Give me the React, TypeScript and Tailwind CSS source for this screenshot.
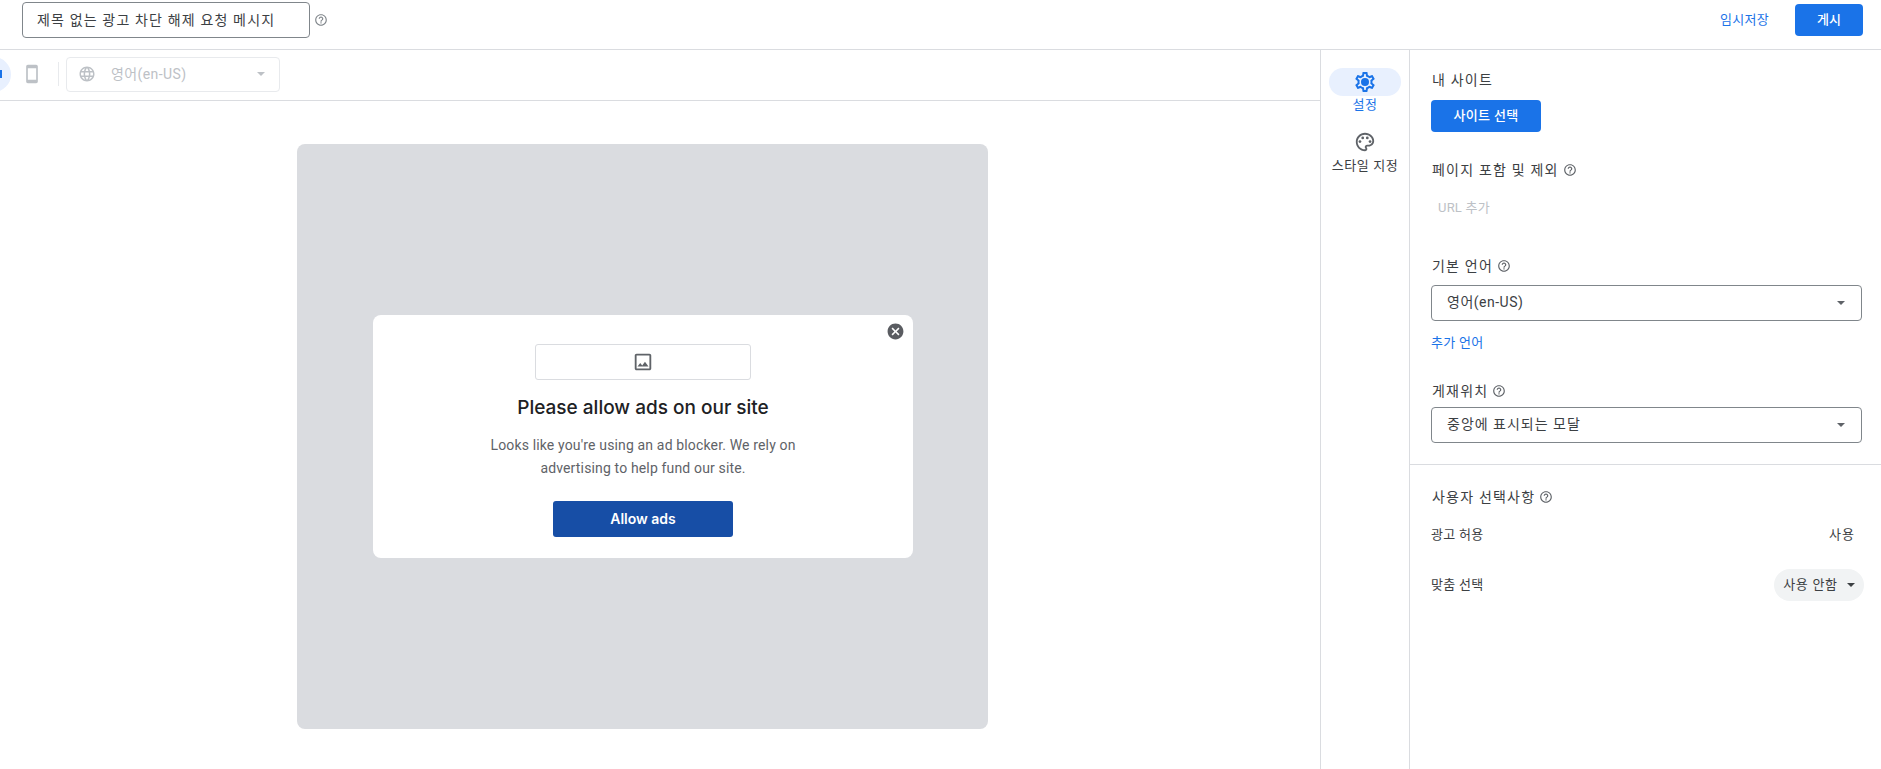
const font = "[font-family:Roboto,'Noto_Sans_CJK_KR',sans-serif]";

function Icon({ d, className, children }: { d?: string; className: string; children?: React.ReactNode }) {
  return (
    <svg viewBox="0 0 24 24" fill="currentColor" className={className}>
      {d && <path d={d} />}
      {children}
    </svg>
  );
}

const helpPath =
  "M11 18h2v-2h-2v2zm1-16C6.48 2 2 6.48 2 12s4.48 10 10 10 10-4.48 10-10S17.52 2 12 2zm0 18c-4.41 0-8-3.59-8-8s3.59-8 8-8 8 3.59 8 8-3.59 8-8 8zm0-14c-2.21 0-4 1.79-4 4h2c0-1.1.9-2 2-2s2 .9 2 2c0 2-3 1.75-3 5h2c0-2.25 3-2.5 3-5 0-2.21-1.79-4-4-4z";
const gearPath =
  "M19.43 12.98c.04-.32.07-.64.07-.98 0-.34-.03-.66-.07-.98l2.11-1.65c.19-.15.24-.42.12-.64l-2-3.46c-.09-.16-.26-.25-.44-.25-.06 0-.12.01-.17.03l-2.49 1c-.52-.4-1.08-.73-1.69-.98l-.38-2.65C14.46 2.18 14.25 2 14 2h-4c-.25 0-.46.18-.49.42l-.38 2.65c-.61.25-1.17.59-1.69.98l-2.49-1c-.06-.02-.12-.03-.18-.03-.17 0-.34.09-.43.25l-2 3.46c-.13.22-.07.49.12.64l2.11 1.65c-.04.32-.07.65-.07.98 0 .33.03.66.07.98l-2.11 1.65c-.19.15-.24.42-.12.64l2 3.46c.09.16.26.25.44.25.06 0 .12-.01.17-.03l2.49-1c.52.4 1.08.73 1.69.98l.38 2.65c.03.24.24.42.49.42h4c.25 0 .46-.18.49-.42l.38-2.65c.61-.25 1.17-.59 1.69-.98l2.49 1c.06.02.12.03.18.03.17 0 .34-.09.43-.25l2-3.46c.12-.22.07-.49-.12-.64l-2.11-1.65zm-1.98-1.71c.04.31.05.52.05.73 0 .21-.02.43-.05.73l-.14 1.13.89.7 1.08.84-.7 1.21-1.27-.51-1.04-.42-.9.68c-.43.32-.84.56-1.25.73l-1.06.43-.16 1.13-.2 1.35h-1.4l-.19-1.35-.16-1.13-1.06-.43c-.43-.18-.83-.41-1.23-.71l-.91-.7-1.06.43-1.27.51-.7-1.21 1.08-.84.89-.7-.14-1.13c-.03-.31-.05-.54-.05-.74s.02-.43.05-.73l.14-1.13-.89-.7-1.08-.84.7-1.21 1.27.51 1.04.42.9-.68c.43-.32.84-.56 1.25-.73l1.06-.43.16-1.13.2-1.35h1.39l.19 1.35.16 1.13 1.06.43c.43.18.83.41 1.23.71l.91.7 1.06-.43 1.27-.51.7 1.21-1.07.85-.89.7.14 1.13z";
const palettePath =
  "M12 22C6.49 22 2 17.51 2 12S6.49 2 12 2s10 4.04 10 9c0 3.31-2.69 6-6 6h-1.77c-.28 0-.5.22-.5.5 0 .12.05.23.13.33.41.47.64 1.06.64 1.67 0 1.38-1.12 2.5-2.5 2.5zm0-18c-4.41 0-8 3.59-8 8s3.59 8 8 8c.28 0 .5-.22.5-.5 0-.16-.08-.28-.14-.35-.41-.46-.63-1.05-.63-1.65 0-1.38 1.12-2.5 2.5-2.5H16c2.21 0 4-1.79 4-4 0-3.86-3.59-7-8-7z";
const globePath =
  "M11.99 2C6.47 2 2 6.48 2 12s4.47 10 9.99 10C17.52 22 22 17.52 22 12S17.52 2 11.99 2zm6.93 6h-2.95c-.32-1.25-.78-2.45-1.38-3.56 1.84.63 3.37 1.91 4.33 3.56zM12 4.04c.83 1.2 1.48 2.53 1.91 3.96h-3.82c.43-1.43 1.08-2.76 1.91-3.96zM4.26 14C4.1 13.36 4 12.69 4 12s.1-1.36.26-2h3.38c-.08.66-.14 1.32-.14 2 0 .68.06 1.34.14 2H4.26zm.82 2h2.95c.32 1.25.78 2.45 1.38 3.56-1.84-.63-3.37-1.9-4.33-3.56zm2.95-8H5.08c.96-1.66 2.49-2.93 4.33-3.56C8.81 5.55 8.35 6.75 8.03 8zM12 19.96c-.83-1.2-1.48-2.53-1.91-3.96h3.82c-.43 1.43-1.08 2.76-1.91 3.96zM14.34 14H9.66c-.09-.66-.16-1.32-.16-2 0-.68.07-1.35.16-2h4.68c.09.65.16 1.32.16 2 0 .68-.07 1.34-.16 2zm.25 5.56c.6-1.11 1.06-2.31 1.38-3.56h2.95c-.96 1.65-2.49 2.93-4.33 3.56zM16.36 14c.08-.66.14-1.32.14-2 0-.68-.06-1.34-.14-2h3.38c.16.64.26 1.31.26 2s-.1 1.36-.26 2h-3.38z";

function Help({ className = "" }: { className?: string }) {
  return <Icon d={helpPath} className={`h-[14px] w-[14px] text-[#5f6368] ${className}`} />;
}

function Caret({ className = "" }: { className?: string }) {
  return <span className={`h-0 w-0 border-x-[4.5px] border-t-[4.5px] border-x-transparent ${className}`} />;
}

function Label({ text, help = true, className = "" }: { text: string; help?: boolean; className?: string }) {
  return (
    <div className={`flex h-5 items-center gap-[4px] text-[14px] tracking-[1.2px] text-[#3c4043] ${className}`}>
      <span>{text}</span>
      {help && <Help />}
    </div>
  );
}

function SelectBox({ value, className = "" }: { value: string; className?: string }) {
  return (
    <div className={`flex h-[36px] w-[431px] items-center justify-between rounded-[4px] border border-[#80868b] pl-[15px] pr-[16px] text-[14px] text-[#3c4043] ${className}`}>
      <span className="mb-[2px]">{value}</span>
      <Caret className="border-t-[#5f6368]" />
    </div>
  );
}

function Modal() {
  return (
    <div className="relative flex h-[243px] w-[540px] flex-col items-center rounded-[8px] bg-white pt-[29px]">
      <Icon
        d="M12 2C6.47 2 2 6.47 2 12s4.47 10 10 10 10-4.47 10-10S17.53 2 12 2zm5 13.59L15.59 17 12 13.41 8.41 17 7 15.59 10.59 12 7 8.41 8.41 7 12 10.59 15.59 7 17 8.41 13.41 12 17 15.59z"
        className="absolute right-[8px] top-[7px] h-[19px] w-[19px] text-[#5a5c61]"
      />
      <div className="flex h-[36px] w-[216px] items-center justify-center rounded-[3px] border border-[#dadce0]">
        <Icon
          d="M19 5v14H5V5h14m0-2H5c-1.1 0-2 .9-2 2v14c0 1.1.9 2 2 2h14c1.1 0 2-.9 2-2V5c0-1.1-.9-2-2-2zm-4.86 8.86l-3 3.87L9 13.14 6 17h12l-3.86-5.14z"
          className="h-[22px] w-[22px] text-[#5f6368]"
        />
      </div>
      <h2 className="mt-[16px] h-[24px] text-[19px] font-medium leading-[24px] text-[#202124] [font-family:Inter,sans-serif]">
        Please allow ads on our site
      </h2>
      <p className="mt-[14px] w-[340px] text-center text-[14px] leading-[23px] tracking-[0.15px] text-[#5f6368]">
        Looks like you're using an ad blocker. We rely on advertising to help fund our site.
      </p>
      <button className="mt-[21px] flex h-[36px] w-[180px] items-center justify-center rounded-[3px] bg-[#174ea6] text-[14px] font-semibold text-white [font-family:Inter,sans-serif]">
        Allow ads
      </button>
    </div>
  );
}

export default function App() {
  return (
    <div className={`flex h-[769px] w-[1881px] flex-col overflow-hidden bg-white ${font}`}>
      <header className="flex h-[50px] shrink-0 items-start border-b border-[#dadce0] pl-[22px] pr-[18px] pt-[2px]">
        <div className="flex h-[36px] w-[288px] items-center rounded-[4px] border border-[#80868b] pl-[14px] text-[14px] tracking-[1.15px] text-[#3c4043]">
          제목 없는 광고 차단 해제 요청 메시지
        </div>
        <Help className="ml-[4px] mt-[11px] text-[#80868b]" />
        <div className="ml-auto mt-[2px] flex items-center">
          <span className="text-[13px] tracking-[0.3px] text-[#1a73e8]">임시저장</span>
          <button className="ml-[26px] h-[32px] w-[68px] rounded-[4px] bg-[#1a73e8] text-[13px] font-medium text-white">게시</button>
        </div>
      </header>

      <div className="flex min-h-0 flex-1">
        <main className="flex w-[1320px] shrink-0 flex-col">
          <div className="flex h-[51px] shrink-0 items-center border-b border-[#dadce0] pb-[2px]">
            <div className="ml-[-24px] flex h-[35px] w-[35px] items-center justify-end rounded-full bg-[#e8f0fe] pr-[9px]">
              <span className="h-[8px] w-[2px] bg-[#1a73e8]" />
            </div>
            <Icon
              d="M17 1.01L7 1c-1.1 0-2 .9-2 2v18c0 1.1.9 2 2 2h10c1.1 0 2-.9 2-2V3c0-1.1-.9-1.99-2-1.99zM17 19H7V5h10v14z"
              className="ml-[11px] h-[20px] w-[20px] text-[#bdc1c6]"
            />
            <span className="ml-[16px] h-[24px] w-px bg-[#e8eaed]" />
            <div className="ml-[7px] flex h-[35px] w-[214px] items-center rounded-[4px] border border-[#e8eaed] pl-[11px] pr-[14px] text-[14px] tracking-[0.4px] text-[#bdc1c6]">
              <Icon d={globePath} className="h-[18px] w-[18px]" />
              <span className="ml-[15px]">영어(en-US)</span>
              <Caret className="ml-auto border-t-[#bdc1c6]" />
            </div>
          </div>
          <div className="pl-[297px] pt-[43px]">
            <div className="flex h-[585px] w-[691px] items-center justify-center rounded-[8px] bg-[#dadce0] pb-[1px] pl-[1px]">
              <Modal />
            </div>
          </div>
        </main>

        <nav className="flex w-[90px] shrink-0 flex-col items-center border-x border-[#dadce0] pt-[18px]">
          <div className="flex h-[28px] w-[72px] items-center justify-center rounded-full bg-[#e8f0fe] text-[#1a73e8]">
            <Icon d={gearPath} className="h-[24px] w-[24px]">
              <circle cx="12" cy="12" r="4" />
            </Icon>
          </div>
          <span className="mt-[1px] text-[13px] leading-[16px] tracking-[0.6px] text-[#1a73e8]">설정</span>
          <Icon d={palettePath} className="mt-[18px] h-[22px] w-[22px] text-[#5f6368]">
            <circle cx="6.5" cy="11.5" r="1.5" />
            <circle cx="9.5" cy="7.5" r="1.5" />
            <circle cx="14.5" cy="7.5" r="1.5" />
            <circle cx="17.5" cy="11.5" r="1.5" />
          </Icon>
          <span className="mt-[5px] whitespace-nowrap text-[13px] leading-[16px] tracking-[0.6px] text-[#3c4043]">스타일 지정</span>
        </nav>

        <aside className="flex min-w-0 flex-1 flex-col pt-[20px]">
          <div className="pl-[21px]">
            <Label text="내 사이트" help={false} className="pl-[1px]" />
            <button className="mt-[10px] h-[32px] w-[110px] rounded-[4px] bg-[#1a73e8] text-[13px] font-medium tracking-[0.3px] text-white">사이트 선택</button>
            <Label text="페이지 포함 및 제외" className="mt-[28px] pl-[1px]" />
            <div className="ml-[7px] mt-[18px] h-[20px] text-[13px] leading-[20px] tracking-[0.2px] text-[#bdc1c6]">URL 추가</div>
            <Label text="기본 언어" className="mt-[38px] pl-[1px]" />
            <SelectBox value="영어(en-US)" className="mt-[9px] tracking-[0.5px]" />
            <div className="mt-[12px] h-[20px] text-[13px] leading-[20px] tracking-[0.3px] text-[#1a73e8]">추가 언어</div>
            <Label text="게재위치" className="mt-[28px] pl-[1px]" />
            <SelectBox value="중앙에 표시되는 모달" className="mt-[6px] tracking-[1px]" />
          </div>
          <div className="mt-[21px] border-t border-[#dadce0] pl-[21px] pr-[17px] pt-[22px]">
            <Label text="사용자 선택사항" className="pl-[1px]" />
            <div className="mt-[18px] flex h-[20px] items-center justify-between pr-[9px] text-[13px] tracking-[0.3px] text-[#3c4043]">
              <span>광고 허용</span>
              <span className="tracking-[1px]">사용</span>
            </div>
            <div className="mt-[24px] flex items-center justify-between text-[13px] tracking-[0.3px] text-[#3c4043]">
              <span>맞춤 선택</span>
              <div className="flex h-[32px] w-[90px] items-center justify-center gap-[9px] rounded-full bg-[#f1f3f4] tracking-[0.7px]">
                <span>사용 안함</span>
                <Caret className="border-t-[#3c4043]" />
              </div>
            </div>
          </div>
        </aside>
      </div>
    </div>
  );
}
